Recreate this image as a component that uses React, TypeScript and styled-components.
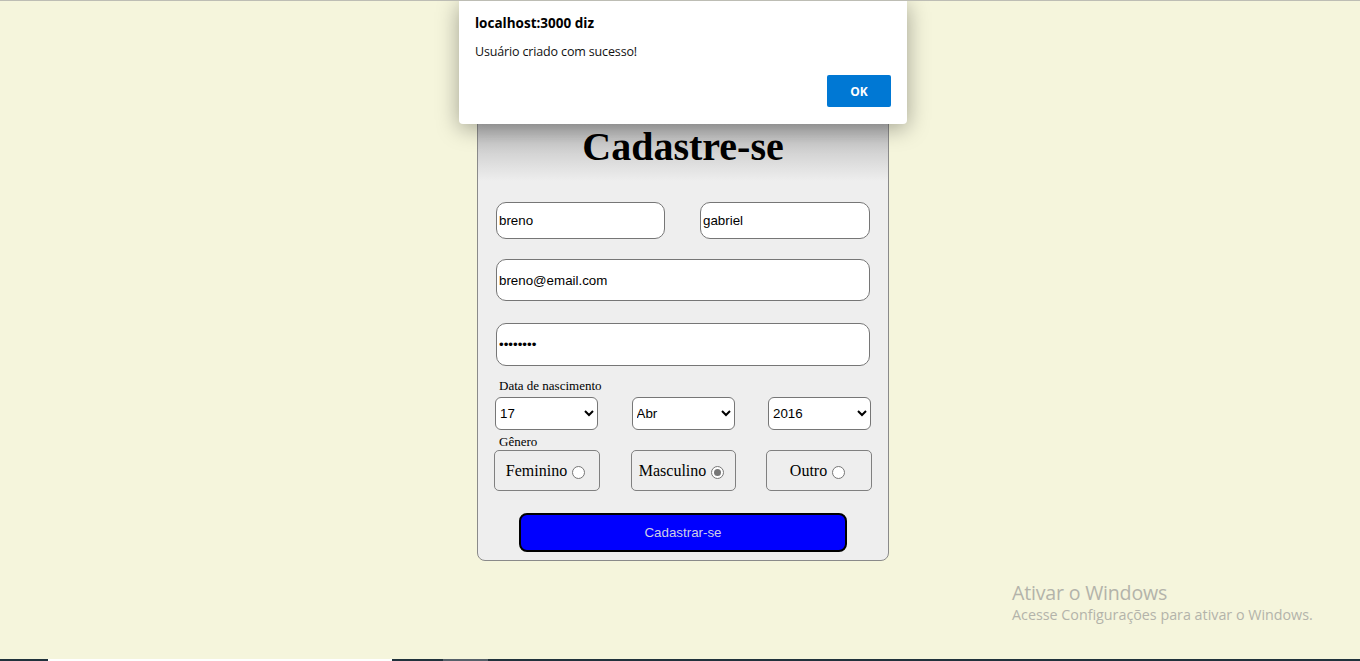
import React from "react";
import styled, { createGlobalStyle } from "styled-components";

const Global = createGlobalStyle`
  html, body { margin: 0; padding: 0; }
  body { background: #f5f5dc; font-family: "Liberation Serif", "Times New Roman", serif; }
  #root { height: 661px; }
`;

const Page = styled.div`
  position: relative;
  height: 661px;
  display: flex;
  flex-direction: column;
  overflow: hidden;
  border-top: 1px solid #bdbdb4;
  box-sizing: border-box;
`;

const Main = styled.div`
  flex: 1;
  display: flex;
  justify-content: center;
  align-items: flex-start;
  padding-left: 6px;
`;

const Card = styled.form`
  margin-top: 94px;
  width: 412px;
  box-sizing: border-box;
  background: linear-gradient(to bottom, #a8a8a8 0px, #c4c4c4 40px, #eeeeee 85px, #eeeeee 100%);
  border: 1px solid #8a8a8a;
  border-radius: 8px;
  padding: 0 17px 8px 17px;
  display: flex;
  flex-direction: column;
`;

const Title = styled.h1`
  margin: 28px 0 0 0;
  height: 46px;
  line-height: 46px;
  font-size: 40px;
  font-weight: bold;
  text-align: center;
  color: #000;
  font-family: "Liberation Serif", "Times New Roman", serif;
`;

const Row = styled.div<{ $mt: number; $inset?: number }>`
  display: flex;
  justify-content: space-between;
  margin: ${(p) => p.$mt}px ${(p) => p.$inset ?? 0}px 0 ${(p) => p.$inset ?? 0}px;
`;

const TextInput = styled.input<{ $w?: number; $h: number; $mt?: number }>`
  box-sizing: border-box;
  width: ${(p) => (p.$w ? `${p.$w}px` : "374px")};
  height: ${(p) => p.$h}px;
  margin: ${(p) => p.$mt ?? 0}px 0 0 ${(p) => (p.$w ? 0 : 1)}px;
  border: 1px solid #767676;
  border-radius: 10px;
  background: #fff;
  padding: 1px 2px;
  font-family: "Liberation Sans", Arial, sans-serif;
  font-size: 13.333px;
  color: #000;
  outline: none;
`;

const SmallLabel = styled.div<{ $mt: number }>`
  margin-top: ${(p) => p.$mt}px;
  padding-left: 4px;
  height: 15px;
  line-height: 15px;
  font-size: 13px;
  color: #000;
  font-family: "Liberation Serif", "Times New Roman", serif;
`;

const Select = styled.select`
  box-sizing: border-box;
  width: 103px;
  height: 33px;
  border: 1px solid #767676;
  border-radius: 6px;
  background: #fff;
  font-family: "Liberation Sans", Arial, sans-serif;
  font-size: 13.333px;
  color: #000;
  padding: 0;
`;

const GenderBox = styled.label<{ $w: number }>`
  box-sizing: border-box;
  width: ${(p) => p.$w}px;
  height: 41px;
  border: 1px solid #808080;
  border-radius: 5px;
  display: flex;
  align-items: center;
  justify-content: center;
  gap: 5px;
  font-size: 16px;
  color: #000;
  font-family: "Liberation Serif", "Times New Roman", serif;
  padding-top: 1px;
`;

const Radio = styled.span<{ $checked?: boolean }>`
  width: 13px;
  height: 13px;
  box-sizing: border-box;
  border-radius: 50%;
  border: 1px solid #767676;
  background: #fff;
  display: inline-flex;
  align-items: center;
  justify-content: center;
  margin: 2px 3px 0 0;
  &::after {
    content: "";
    width: 7px;
    height: 7px;
    border-radius: 50%;
    background: ${(p) => (p.$checked ? "#767676" : "transparent")};
  }
`;

const Submit = styled.button`
  align-self: center;
  margin: 22px 0 0 0;
  box-sizing: border-box;
  width: 328px;
  height: 39px;
  background: #0000ff;
  border: 2px solid #000;
  border-radius: 8px;
  color: #cfcfe6;
  font-family: "Liberation Sans", Arial, sans-serif;
  font-size: 13.333px;
`;

const Dialog = styled.div`
  position: absolute;
  left: 459px;
  top: 0;
  width: 448px;
  height: 123px;
  box-sizing: border-box;
  background: #fff;
  border-radius: 0 0 4px 4px;
  box-shadow: 0 4px 22px rgba(0, 0, 0, 0.35);
  padding: 0 16px;
  display: flex;
  flex-direction: column;
  font-family: "Open Sans", "Noto Sans", sans-serif;
  color: #1a1a1a;
`;

const DialogTitle = styled.div`
  margin-top: 13px;
  font-size: 13.5px;
  font-weight: 700;
  line-height: 18px;
  letter-spacing: 0;
  color: #000;
`;

const DialogMsg = styled.div`
  margin-top: 11px;
  font-size: 12.5px;
  line-height: 17px;
  letter-spacing: -0.15px;
  color: #111;
`;

const DialogActions = styled.div`
  display: flex;
  justify-content: flex-end;
  margin-top: 15px;
`;

const OkButton = styled.button`
  width: 64px;
  height: 32px;
  border: none;
  border-radius: 2px;
  background: #0078d4;
  color: #fff;
  font-family: "Open Sans", "Noto Sans", sans-serif;
  font-weight: 700;
  font-size: 12px;
`;

const Watermark = styled.div`
  position: absolute;
  left: 1012px;
  top: 580px;
  font-family: "Open Sans", "Noto Sans", sans-serif;
  color: #b3b3aa;
`;

const WmTitle = styled.div`
  font-size: 19.6px;
  line-height: 24px;
  letter-spacing: -0.2px;
`;

const WmSub = styled.div`
  font-size: 14.3px;
  line-height: 20px;
  letter-spacing: 0;
`;

const Taskbar = styled.div`
  height: 2px;
  display: flex;
  background: #20323c;
`;

const TaskSeg = styled.div<{ $w: number; $c: string }>`
  width: ${(p) => p.$w}px;
  background: ${(p) => p.$c};
`;

export default function App() {
  return (
    <>
      <Global />
      <Page>
        <Main>
          <Card onSubmit={(e) => e.preventDefault()}>
            <Title>Cadastre-se</Title>
            <Row $mt={32} $inset={1}>
              <TextInput $w={169} $h={37} defaultValue="breno" />
              <TextInput $w={170} $h={37} defaultValue="gabriel" />
            </Row>
            <TextInput $h={42} $mt={20} defaultValue="breno@email.com" />
            <TextInput $h={43} $mt={22} type="password" defaultValue="12345678" />
            <SmallLabel $mt={12}>Data de nascimento</SmallLabel>
            <Row $mt={4}>
              <Select defaultValue="17">
                <option value="17">17</option>
              </Select>
              <Select defaultValue="Abr">
                <option value="Abr">Abr</option>
              </Select>
              <Select defaultValue="2016">
                <option value="2016">2016</option>
              </Select>
            </Row>
            <SmallLabel $mt={4}>Gênero</SmallLabel>
            <Row $mt={1} $inset={-1}>
              <GenderBox $w={106}>
                Feminino <Radio />
              </GenderBox>
              <GenderBox $w={105}>
                Masculino <Radio $checked />
              </GenderBox>
              <GenderBox $w={106}>
                Outro <Radio />
              </GenderBox>
            </Row>
            <Submit type="submit">Cadastrar-se</Submit>
          </Card>
        </Main>
        <Taskbar>
          <TaskSeg $w={48} $c="#20323c" />
          <TaskSeg $w={344} $c="#ffffff" />
          <TaskSeg $w={51} $c="#20323c" />
          <TaskSeg $w={45} $c="#56616a" />
        </Taskbar>
        <Dialog role="alertdialog">
          <DialogTitle>localhost:3000 diz</DialogTitle>
          <DialogMsg>Usuário criado com sucesso!</DialogMsg>
          <DialogActions>
            <OkButton>OK</OkButton>
          </DialogActions>
        </Dialog>
        <Watermark>
          <WmTitle>Ativar o Windows</WmTitle>
          <WmSub>Acesse Configurações para ativar o Windows.</WmSub>
        </Watermark>
      </Page>
    </>
  );
}
